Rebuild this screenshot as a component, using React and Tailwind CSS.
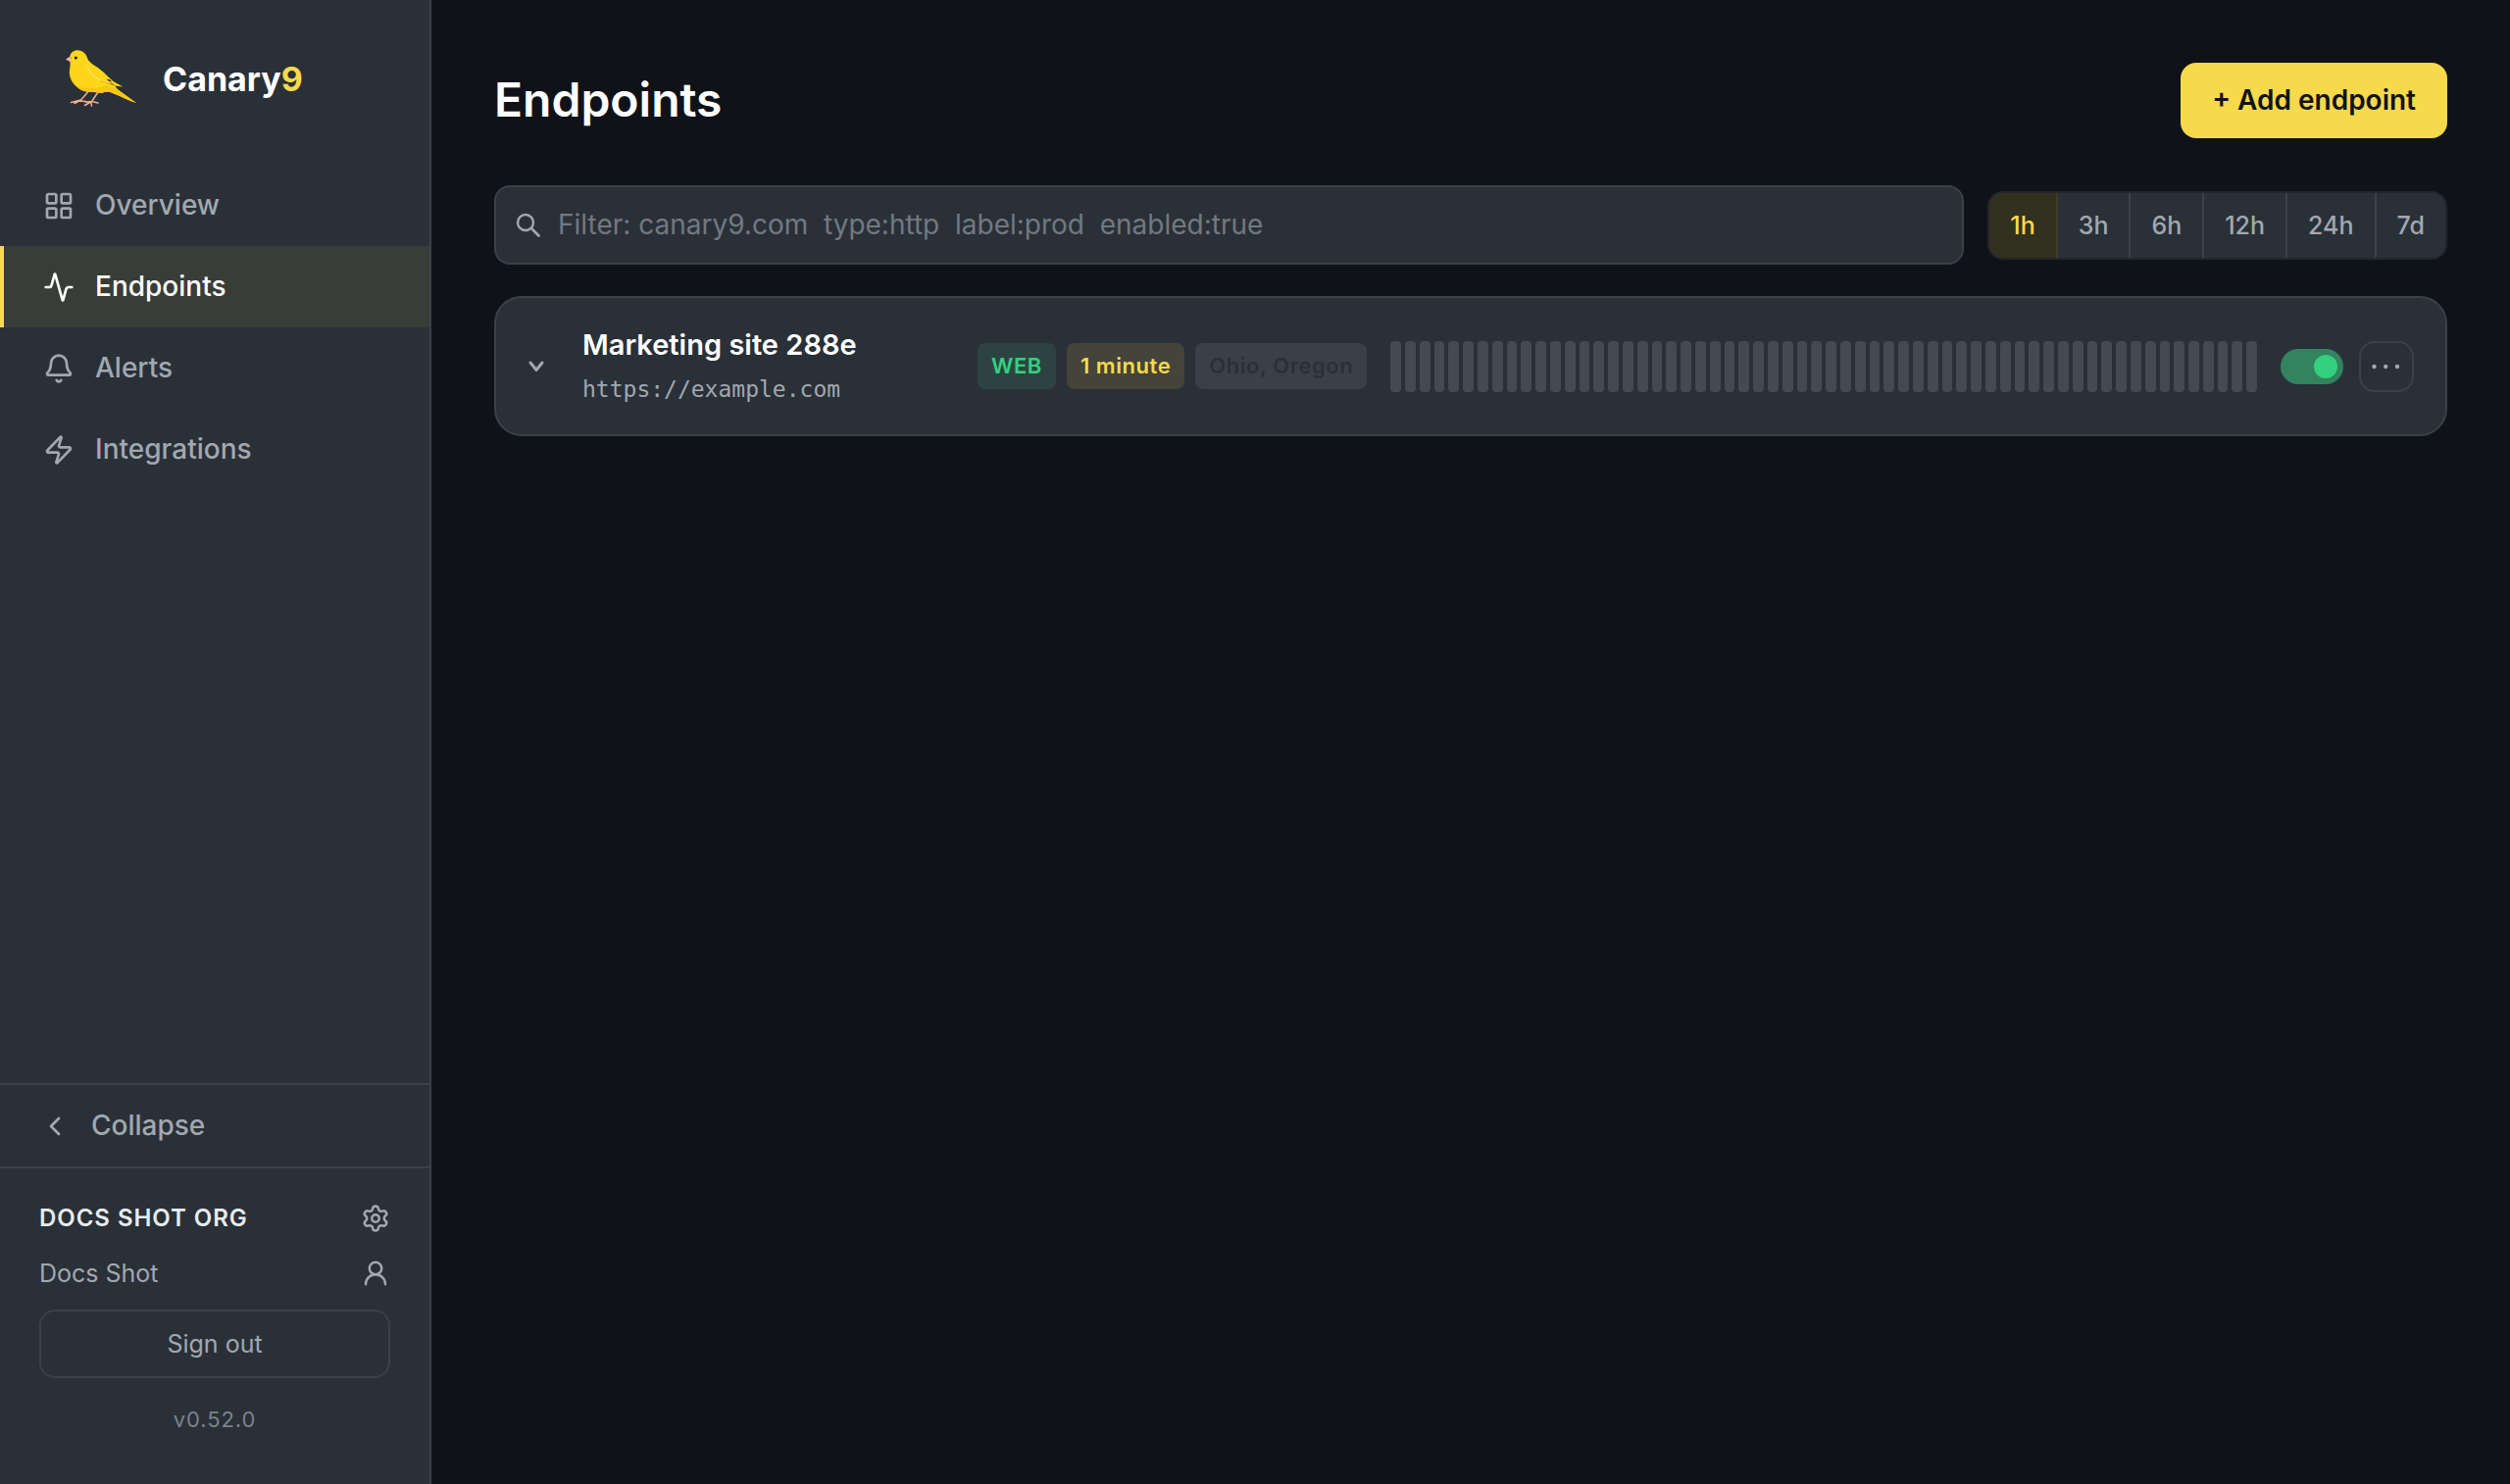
import { useState } from "react";
import {
  Activity,
  Bell,
  ChevronLeft,
  LayoutGrid,
  Settings,
  UserRound,
  Zap,
} from "lucide-react";

const navItems = [
  { label: "Overview", href: "#overview", icon: LayoutGrid },
  { label: "Endpoints", href: "#endpoints", icon: Activity, active: true },
  { label: "Alerts", href: "#alerts", icon: Bell },
  { label: "Integrations", href: "#integrations", icon: Zap },
];

const ranges = ["1h", "3h", "6h", "12h", "24h", "7d"];

const endpoints = [
  {
    id: 1,
    name: "Marketing site 288e",
    url: "https://example.com",
    type: "WEB",
    interval: "1 minute",
    regions: "Ohio, Oregon",
    checks: Array.from({ length: 60 }, () => null),
  },
];

function CanaryLogo() {
  return (
    <svg viewBox="0 0 74 60" className="h-[60px] w-[74px]" aria-hidden="true">
      <g fill="none" stroke="#efb08c" strokeWidth="1.500" strokeLinecap="round" strokeLinejoin="round">
        <path d="M22.500 43 L15.500 51 L5.500 53.500 M15.500 51 L9 54.500 M14 52 L20.500 52.500" />
        <path d="M33 43 L26.500 52.500 L20 53 M26.500 52.500 L19.500 56.500 M26 54 L26.500 57 M26.500 52.500 L33 54" />
      </g>
      <path d="M0 9.500 L4.500 6.500 L6.500 11 L4.500 12.500 C3.500 11 1.500 10.500 0 9.500 Z" fill="#f3b79a" />
      <path
        d="M4.300 6.500 C5 2.500 8.500 0.300 12 0.300 C17 0.300 20.500 3.500 22 8 C23 11.500 26.500 14 30 16.300 C35 19.500 38.500 22.500 41.700 25.700 L48.500 32 L58.300 37.500 L50 36.500 L53.500 40.700 L72 54 C64 52 57 47.500 48.300 44.300 C44 42 40 42.500 36.700 44 C33 43 29 43.500 25 43 C19 42.500 15 41 11.700 38 C8 35 6 32 5 29 C3.500 25 3.700 22 4.300 18 C4.800 15.500 4.500 14 4.500 12.500 C6.500 11 6 8.500 4.300 6.500 Z"
        fill="#ffd61a"
      />
      <path
        d="M9 35 C16 40 30 41 41 36 L52 39.500 L72 54 C64 52 57 47.500 48.300 44.300 C44 42 40 42.500 36.700 44 C33 43 29 43.500 25 43 C18 42.500 12 39.500 9 35 Z"
        fill="#f6c712"
      />
      <path
        d="M21.700 15.700 C24 24 29 28 35 30.500 L42 33"
        fill="none"
        stroke="#ffe04f"
        strokeWidth="1.600"
        strokeLinecap="round"
      />
      <path d="M35 31.500 L50 36.300" stroke="#d9a90f" strokeWidth="0.800" />
      <path d="M41.500 29.500 L45.500 30.500 L47 32.500 L43.500 31.500 Z" fill="#2a2410" />
      <path d="M45 33.500 L49 35.500" stroke="#4a3d12" strokeWidth="0.800" />
      <circle cx="10.300" cy="8" r="1.500" fill="#1d1a10" />
    </svg>
  );
}

function Sidebar() {
  return (
    <aside className="flex w-[440px] shrink-0 flex-col border-r-2 border-[#3a4149] bg-[#2a3038]">
      <a href="#home" className="flex items-center gap-[25px] px-[67px] pt-[51px] pb-[57px]">
        <CanaryLogo />
        <span className="text-[34px] leading-[60px] font-bold text-white">
          Canary<span className="text-[#f7d94c]">9</span>
        </span>
      </a>

      <nav className="flex-1">
        {navItems.map((item) => {
          const Icon = item.icon;
          return (
            <a
              key={item.label}
              href={item.href}
              className={
                item.active
                  ? "flex items-center gap-[21px] border-l-4 border-[#f7d94c] bg-[#393d38] px-10 py-5 text-[28px] leading-[43px] font-medium text-white"
                  : "flex items-center gap-[21px] border-l-4 border-transparent px-10 py-5 text-[28px] leading-[43px] font-medium text-[#a1a8b0]"
              }
            >
              <Icon className="h-8 w-8" strokeWidth={2} />
              <span>{item.label}</span>
            </a>
          );
        })}
      </nav>

      <button
        type="button"
        className="flex items-center gap-[21px] border-y-2 border-[#3a4149] px-10 py-5 text-[28px] leading-[43px] font-medium text-[#a1a8b0]"
      >
        <ChevronLeft className="h-8 w-8" strokeWidth={2} />
        <span>Collapse</span>
      </button>

      <div className="px-10 pt-8 pb-12">
        <div className="flex items-center justify-between">
          <span className="text-[24px] leading-[38px] font-semibold tracking-[0.04em] text-[#e8ebee]">
            DOCS SHOT ORG
          </span>
          <button type="button" aria-label="Organization settings" className="text-[#a1a8b0]">
            <Settings className="h-[30px] w-[30px]" strokeWidth={2} />
          </button>
        </div>
        <div className="mt-[18px] flex items-center justify-between text-[#a1a8b0]">
          <span className="text-[25px] leading-[38px]">Docs Shot</span>
          <button type="button" aria-label="Profile">
            <UserRound className="h-[30px] w-[30px]" strokeWidth={2} />
          </button>
        </div>
        <button
          type="button"
          className="mt-[18px] w-full rounded-2xl border-2 border-[#3a4149] py-4 text-[25px] leading-[34px] text-[#a1a8b0]"
        >
          Sign out
        </button>
        <p className="mt-6 text-center text-[22px] leading-9 tracking-[0.04em] text-[#7b838b]">v0.52.0</p>
      </div>
    </aside>
  );
}

function EndpointCard({ endpoint }) {
  const [enabled, setEnabled] = useState(true);

  return (
    <article className="flex items-center gap-6 rounded-[28px] border-2 border-[#3a4149] bg-[#2a3038] px-8 py-7">
      <button type="button" aria-label="Expand endpoint" className="w-8 shrink-0 text-[#a1a8b0]">
        <svg viewBox="0 0 18 18" className="h-[18px] w-[18px]" fill="none" aria-hidden="true">
          <path
            d="M3 5 L9 12.500 L15 5"
            stroke="currentColor"
            strokeWidth="3"
            strokeLinecap="round"
            strokeLinejoin="round"
          />
        </svg>
      </button>

      <div className="w-[379px] shrink-0">
        <h2 className="text-[29px] leading-10 font-semibold text-white">{endpoint.name}</h2>
        <p className="mt-2 font-['DejaVu_Sans_Mono',monospace] text-[23px] leading-[35px] text-[#a1a8b0]">
          {endpoint.url}
        </p>
      </div>

      <div className="flex shrink-0 gap-[11px] text-[22px] leading-[35px] font-semibold tracking-wide">
        <span className="rounded-lg bg-[#2c4341] px-[14px] py-[6px] text-[#34d07f]">
          {endpoint.type}
        </span>
        <span className="rounded-lg bg-[#44443a] px-[14px] py-[6px] text-[#f7d94c]">
          {endpoint.interval}
        </span>
        <span className="rounded-lg bg-[#3a4048] px-[14px] py-[6px] text-[#2a3038]">
          {endpoint.regions}
        </span>
      </div>

      <div className="flex h-13 flex-1 gap-1">
        {endpoint.checks.map((check, idx) => (
          <span key={idx} className="flex-1 rounded-sm bg-[#444a51]" />
        ))}
      </div>

      <div className="flex shrink-0 items-center gap-4">
        <label className="flex h-9 w-16 cursor-pointer items-center rounded-full bg-[#32835e] p-[6px]">
          <input
            type="checkbox"
            checked={enabled}
            onChange={(e) => setEnabled(e.target.checked)}
            aria-label="Endpoint enabled"
            className="h-6 w-6 cursor-pointer appearance-none rounded-full bg-[#34d07f] checked:ml-auto"
          />
        </label>
        <button
          type="button"
          aria-label="More actions"
          className="flex h-13 w-14 items-center justify-center rounded-2xl border-2 border-[#3a4149] text-[#a1a8b0]"
        >
          <svg viewBox="0 0 32 8" className="h-2 w-8" fill="currentColor" aria-hidden="true">
            <circle cx="3.500" cy="4" r="2.200" />
            <circle cx="15.200" cy="4" r="2.200" />
            <circle cx="27" cy="4" r="2.200" />
          </svg>
        </button>
      </div>
    </article>
  );
}

export default function App() {
  const [filter, setFilter] = useState("");
  const [range, setRange] = useState("1h");

  return (
    <div className="flex min-h-screen bg-[#0f1318] font-['Inter',sans-serif]">
      <Sidebar />

      <main className="min-w-0 flex-1 p-16">
        <header className="flex items-start justify-between">
          <h1 className="text-[48px] leading-[75px] font-semibold text-white">Endpoints</h1>
          <button
            type="button"
            className="rounded-2xl bg-[#f7d94c] px-8 py-4 text-[28px] leading-[45px] font-semibold text-[#0f1318]"
          >
            + Add endpoint
          </button>
        </header>

        <div className="mt-12 flex items-center gap-6">
          <label className="flex flex-1 items-center gap-[17px] rounded-2xl border-2 border-[#3a4149] bg-[#2a3038] px-5 py-4">
            <svg viewBox="0 0 26 26" className="h-[26px] w-[26px] text-[#a1a8b0]" fill="none" aria-hidden="true">
              <circle cx="10" cy="10" r="8" stroke="currentColor" strokeWidth="2.400" />
              <path d="M16 16 L23.500 23.500" stroke="currentColor" strokeWidth="2.800" strokeLinecap="round" />
            </svg>
            <input
              type="text"
              aria-label="Filter endpoints"
              value={filter}
              onChange={(e) => setFilter(e.target.value)}
              placeholder="Filter: canary9.com  type:http  label:prod  enabled:true"
              className="flex-1 bg-transparent text-[28px] leading-[45px] whitespace-pre text-white outline-none placeholder:text-[#727980]"
            />
          </label>

          <div className="flex overflow-hidden rounded-2xl border-2 border-[#22272d] bg-[#2a3038]">
            {ranges.map((item) => (
              <button
                key={item}
                type="button"
                onClick={() => setRange(item)}
                className={
                  item === range
                    ? "border-r-2 border-[#3f3c26] bg-[#32301f] px-[21px] text-[25px] leading-[66px] font-medium text-[#f7d94c]"
                    : "border-r-2 border-[#3a4149] px-[21px] text-[25px] leading-[66px] font-medium text-[#a1a8b0] last:border-r-0"
                }
              >
                {item}
              </button>
            ))}
          </div>
        </div>

        <section className="mt-8">
          {endpoints.map((endpoint) => (
            <EndpointCard key={endpoint.id} endpoint={endpoint} />
          ))}
        </section>
      </main>
    </div>
  );
}
